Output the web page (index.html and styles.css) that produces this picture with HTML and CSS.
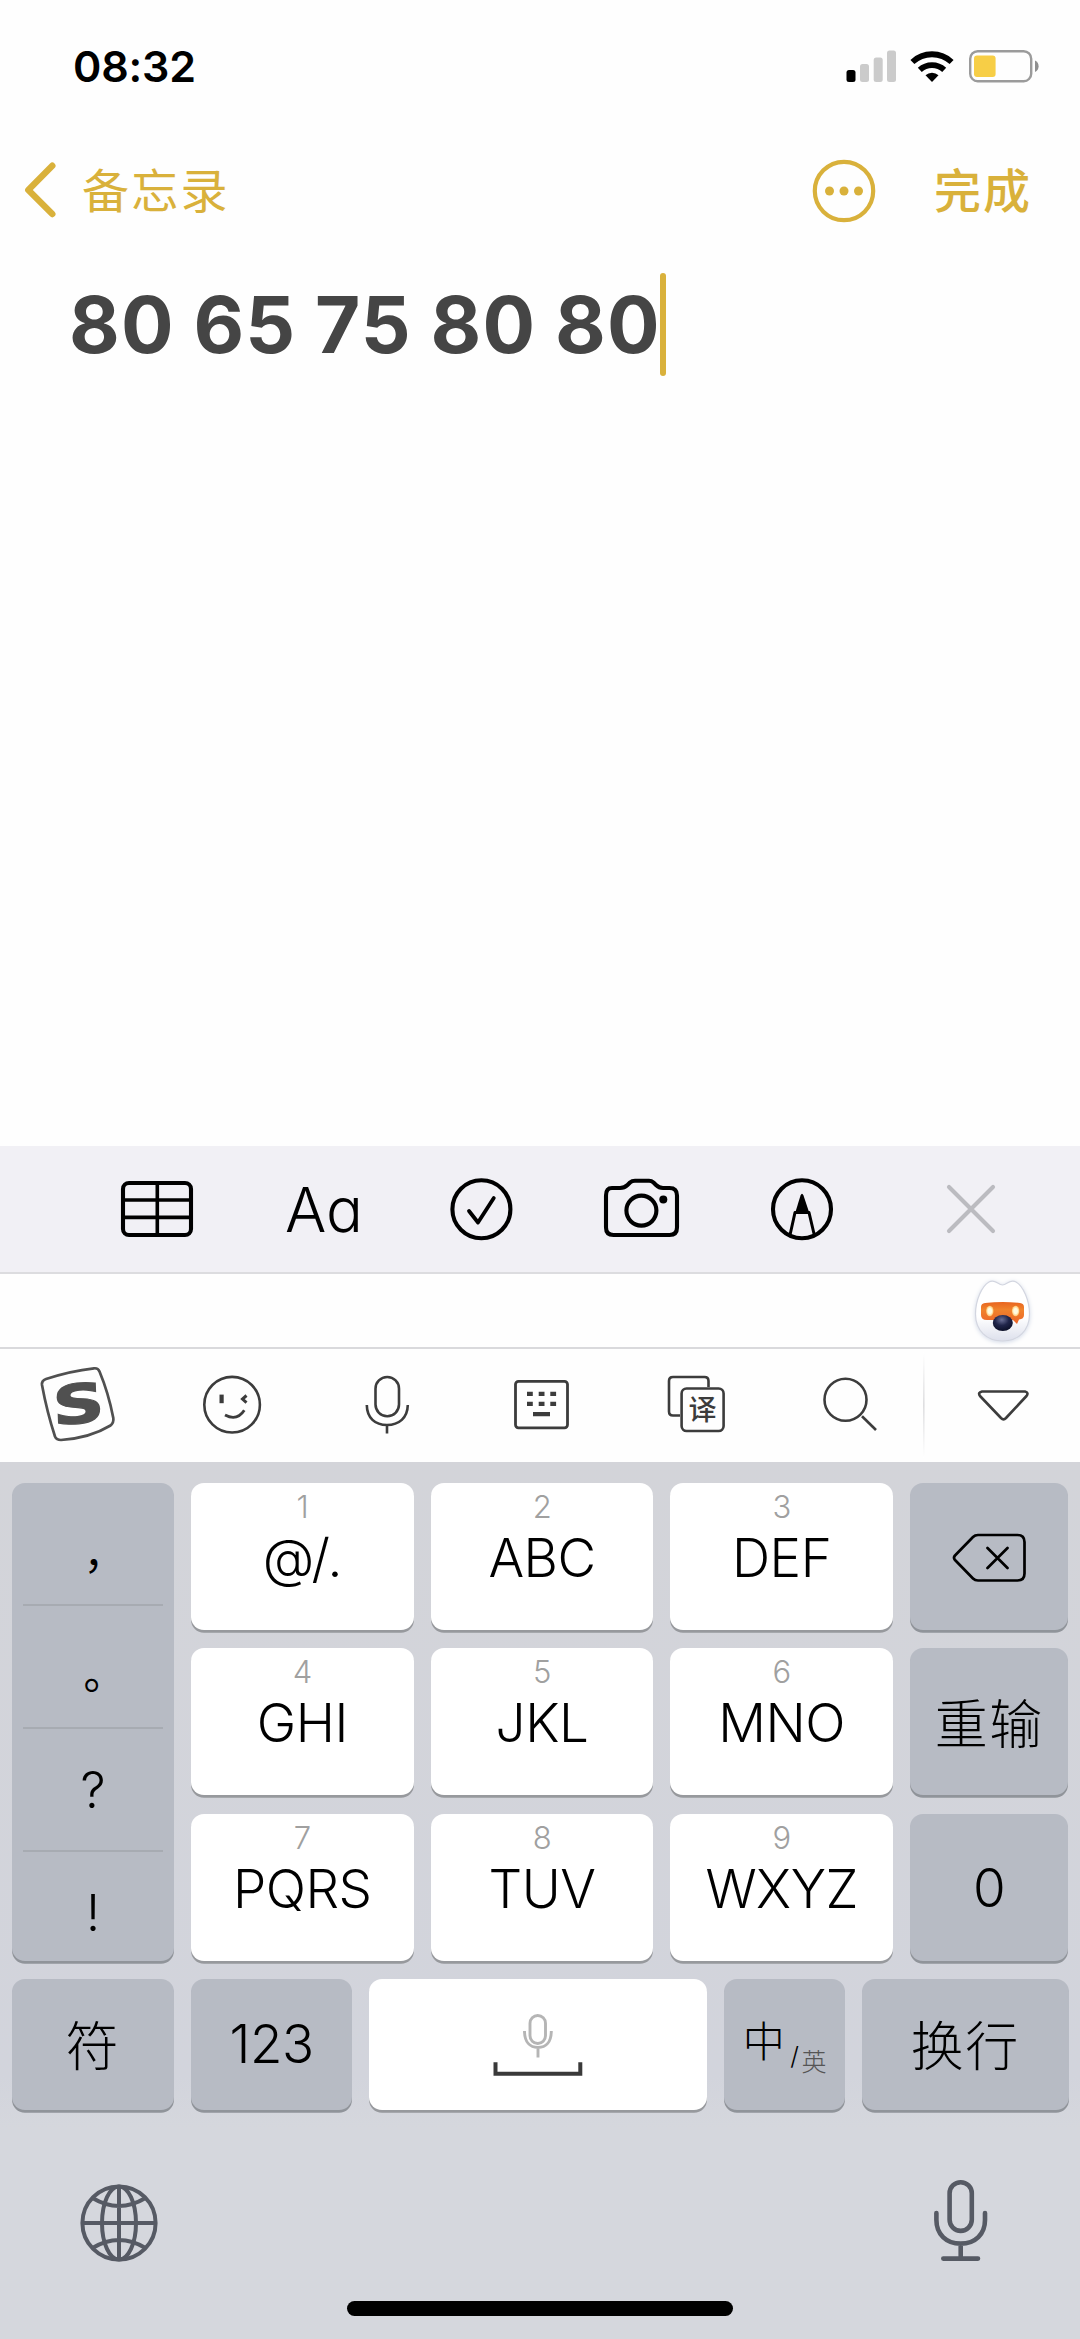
FILE: index.html
```html
<!DOCTYPE html>
<html lang="zh-CN">
<head>
<meta charset="utf-8">
<title>备忘录</title>
<link rel="stylesheet" href="styles.css">
</head>
<body>
<div class="phone">
  <header class="status">
    <span class="time">08:32</span>
    <svg class="status-icons" width="194" height="34" viewBox="846 50 194 34">
      <rect x="846.500" y="70" width="9" height="12" rx="2.5"/>
      <g fill="#cbcbcb"><rect x="860" y="64" width="9" height="18" rx="2.5"/><rect x="873.7" y="57.6" width="9" height="24.4" rx="2.5"/><rect x="887" y="50.6" width="9" height="31.4" rx="2.5"/></g>
      <path d="M932 82 L925.5 75.3 A9.6 9.6 0 0 1 938.5 75.3 Z"/>
      <g fill="none" stroke="#000" stroke-width="5.8"><path d="M919.8 69.8 A18 18 0 0 1 944.2 69.8"/><path d="M912.4 62 A28.6 28.6 0 0 1 951.6 62"/></g>
      <rect x="970.2" y="51.2" width="61" height="30" rx="7.5" fill="none" stroke="#9b9b9b" stroke-width="2.4"/>
      <rect x="974" y="55.6" width="21.6" height="21.4" rx="3" fill="#f7ce46"/>
      <path d="M1035 60.5 a6.4 6.4 0 0 1 0 11.5z" fill="#8f8f8f"/>
    </svg>
  </header>
  <nav class="nav">
    <svg class="chevron" width="34" height="56" viewBox="0 0 34 56"><path d="M29.300 3.700 L5.300 28 L29.300 52" class="gold" stroke-width="6.4"/></svg>
    <span class="back">备忘录</span>
    <svg class="more" width="64" height="64" viewBox="0 0 64 64"><circle cx="32" cy="32" r="29.2" class="gold" stroke-width="4.2"/><g fill="#d9b13b"><circle cx="17.5" cy="32" r="4.5"/><circle cx="32" cy="32" r="4.5"/><circle cx="46.5" cy="32" r="4.5"/></g></svg>
    <span class="done">完成</span>
  </nav>
  <main class="note"><span class="title">80 65 75 80 80</span><i class="caret"></i></main>

  <svg class="format" width="1080" height="126" viewBox="0 1146 1080 126">
    <g fill="none" stroke="#000" stroke-width="4.1" stroke-linecap="round" stroke-linejoin="round">
      <rect x="123" y="1183" width="68" height="52" rx="6"/>
      <path stroke-width="3.6" d="M123 1200H191M123 1217.4H191M157.3 1183V1235"/>
      <circle cx="481.4" cy="1209.2" r="29"/>
      <path stroke-width="3.8" d="M469 1211L478 1222.5L493.8 1198"/>
      <path d="M612 1188H620Q624.5 1188 627.5 1185L630 1182.500Q632 1180.700 635 1180.700H649Q651.500 1180.700 653.500 1182.500L656 1185Q659 1188 663 1188H669.500Q677 1188 677 1195.500V1227.500Q677 1235 669.500 1235H613.500Q606 1235 606 1227.500V1195.500Q606 1188 612 1188Z"/>
      <circle cx="641.4" cy="1210.6" r="15"/>
      <circle cx="802" cy="1209.2" r="29"/>
      <path stroke-width="3" stroke-linecap="butt" d="M790 1235L795 1212.500H809L814.300 1235"/>
      <path stroke="#bbbbc0" d="M949 1187L993 1231M993 1187L949 1231"/>
    </g>
    <circle cx="663.3" cy="1199.5" r="4"/>
    <path d="M795 1213.500L800.500 1195.500Q802 1192 803.500 1195.500L809.500 1213.500Z"/>
    <text class="aa" x="285" y="1231.500" textLength="78" lengthAdjust="spacingAndGlyphs">Aa</text>
  </svg>

  <section class="candidates">
    <svg width="70" height="73" viewBox="967 1274 70 73">
      <defs>
        <linearGradient id="face" x1="0" y1="0" x2="0" y2="1"><stop offset=".6" stop-color="#fff"/><stop offset="1" stop-color="#dde0ec"/></linearGradient>
        <radialGradient id="nose" cx=".45" cy=".3" r=".7"><stop offset="0" stop-color="#6a6f96"/><stop offset=".5" stop-color="#20254a"/><stop offset="1" stop-color="#0c1028"/></radialGradient>
        <radialGradient id="eye"><stop offset=".5" stop-color="#fffbe0"/><stop offset="1" stop-color="#ffc36b"/></radialGradient>
        <linearGradient id="visor" x1="0" y1="0" x2="0" y2="1"><stop offset="0" stop-color="#e8641f"/><stop offset=".35" stop-color="#f0832c"/><stop offset="1" stop-color="#ec6428"/></linearGradient>
      </defs>
      <path class="mascot" fill="url(#face)" stroke="#d3d6e0" stroke-width="1.200" d="M989 1282C995 1278.500 998 1285 1002.500 1285C1007 1285 1010 1278.500 1016 1282C1023 1286 1029.500 1300 1029.500 1314C1029.500 1331 1018 1341 1002.500 1341C987 1341 975.500 1331 975.500 1314C975.500 1300 982 1286 989 1282Z"/>
      <path fill="url(#visor)" d="M985 1303Q1003 1301 1020 1303Q1024 1303.500 1024 1307V1315Q1024 1319 1019 1319.500L1017 1324L1013 1320H987Q981 1320 981 1315V1307Q981 1303.500 985 1303Z"/>
      <ellipse cx="989.800" cy="1311" rx="3.700" ry="5.200" fill="url(#eye)"/><ellipse cx="1015.600" cy="1311" rx="3.700" ry="5.200" fill="url(#eye)"/>
      <ellipse cx="1002.800" cy="1323" rx="10" ry="8" fill="url(#nose)"/>
    </svg>
  </section>

  <svg class="tools" width="1080" height="115" viewBox="0 1349 1080 113">
    <defs><linearGradient id="fade" x1="0" y1="0" x2="0" y2="1"><stop offset="0" stop-color="#fff"/><stop offset=".5" stop-color="#dedee0"/><stop offset="1" stop-color="#fff"/></linearGradient></defs>
    <g fill="none" stroke="#3c3c3c" stroke-width="2.600">
      <path stroke="#505050" stroke-width="2.700" d="M46 1379Q70 1371 94 1368.300Q98 1367.800 99.500 1371.500Q108.500 1393 113.300 1418Q114 1422.500 110.500 1425.500Q90 1438 61 1440Q56.500 1440 55 1436.500Q47 1412 42 1385Q41.500 1380.500 46 1379Z"/>
      <circle cx="232.100" cy="1404.700" r="27.800"/>
      <path stroke-width="3" d="M246.500 1395.500L242.500 1399L246.500 1402.600"/>
      <path stroke-width="2.800" d="M225 1415Q237 1421.500 244.300 1410.300"/>
      <rect x="375.500" y="1377" width="23.500" height="39.300" rx="11.700"/>
      <path d="M366.800 1405C367 1418 375 1425 387 1425S407.500 1418 407.800 1405M387 1425V1433.500"/>
      <rect x="515.500" y="1381.300" width="52" height="46.500" rx="3" stroke-width="2.800"/>
      <path d="M680 1415.500H673Q669 1415.500 669 1411.500V1381Q669 1377 673 1377H704.500Q708.500 1377 708.500 1381V1387"/>
      <rect x="681.600" y="1388.500" width="42" height="42.500" rx="5"/>
      <circle cx="845.500" cy="1399.700" r="21"/>
      <path d="M862 1416.300L876 1430"/>
      <path stroke-linejoin="round" d="M982 1391.500H1025Q1029 1392.500 1026.500 1396L1006 1418Q1003.500 1420.500 1001 1418L980 1396Q977.500 1392.500 982 1391.500Z"/>
    </g>
    <g fill="#3c3c3c"><rect x="219.500" y="1394.600" width="4.200" height="8.600"/>
      <path d="M527 1391.700h5.800v4.300h-5.800zM538.700 1391.700h5.800v4.300h-5.800zM550.300 1391.700h5.800v4.300h-5.800zM527 1401.700h5.800v4.300h-5.800zM538.700 1401.700h5.800v4.300h-5.800zM550.300 1401.700h5.800v4.300h-5.800zM533 1412h17v4.300h-17z"/></g>
    <rect x="923" y="1352" width="1.600" height="106" fill="url(#fade)"/>
    <text class="logo" transform="translate(78.500 1403.500) rotate(-6) skewX(-4) scale(1.340 1)" x="0" y="19.500" text-anchor="middle">S</text>
    <text class="trans" x="702.500" y="1420" text-anchor="middle">译</text>
  </svg>

  <section class="keyboard">
    <div class="pad">
      <div class="key dark marks"><span class="comma">，</span><span class="stop">。</span><span>?</span><span>!</span></div>
      <div class="key"><small>1</small><b>@/.</b></div>
      <div class="key"><small>2</small><b>ABC</b></div>
      <div class="key"><small>3</small><b>DEF</b></div>
      <div class="key dark"><svg width="76" height="52" viewBox="950.500 1531.500 76 52" fill="none" stroke="#000" stroke-width="2.700" stroke-linecap="round" stroke-linejoin="round"><path d="M977.500 1535.500H1017Q1024 1535.500 1024 1542.500V1574Q1024 1581 1017 1581H977.500Q974.500 1581 972.500 1579L954.500 1560.500Q952.500 1558.300 954.500 1556L972.500 1537.500Q974.500 1535.500 977.500 1535.500ZM987 1548.500L1007 1568.500M1007 1548.500L987 1568.500"/></svg></div>
      <div class="key"><small>4</small><b>GHI</b></div>
      <div class="key"><small>5</small><b>JKL</b></div>
      <div class="key"><small>6</small><b>MNO</b></div>
      <div class="key dark han">重输</div>
      <div class="key"><small>7</small><b>PQRS</b></div>
      <div class="key"><small>8</small><b>TUV</b></div>
      <div class="key"><small>9</small><b>WXYZ</b></div>
      <div class="key dark zero">0</div>
    </div>
    <div class="bottom-row">
      <div class="key dark han">符</div>
      <div class="key dark">123</div>
      <div class="key space"><svg width="92" height="66" viewBox="492 2012 92 66" fill="none"><g stroke="#b5b5b5" stroke-width="2.900"><rect x="530" y="2016.500" width="15.500" height="28" rx="7.700"/><path d="M524.500 2032C524.500 2043 530 2048.500 538 2048.500S551.300 2043 551.300 2032M538 2048.500V2058.500"/></g><path stroke="#3a3a3a" stroke-width="4" d="M495.500 2063.300V2074.700H580.300V2063.300"/></svg></div>
      <div class="key dark lang"><span>中</span><em>/</em><i>英</i></div>
      <div class="key dark han">换行</div>
    </div>
    <div class="system">
      <svg width="80" height="80" viewBox="-40 -40 80 80" fill="none" stroke="#565a64" stroke-width="4"><circle r="36.600"/><ellipse rx="17" ry="36.600"/><path d="M0 -37V37M-37 0H37M-26.500 -25Q0 -9 26.500 -25M-26.500 25Q0 9 26.500 25"/></svg>
      <svg class="dictate" width="56" height="84" viewBox="933 2178 56 84" fill="none" stroke="#565a64" stroke-width="4.600" stroke-linecap="round"><rect x="949.600" y="2182.200" width="22.200" height="48.700" rx="11.100"/><path d="M936.400 2213V2220C936.400 2234 946 2243.600 960.700 2243.600S985 2234 985 2220V2213M960.700 2244V2258.500M943.300 2258.600H978"/></svg>
    </div>
    <div class="home"></div>
  </section>
</div>
</body>
</html>
```
FILE: styles.css
```css
* { box-sizing: border-box; }
body { margin: 0; background: #fefefe; font-family: Inter, "Noto Sans CJK SC", sans-serif; color: #000; }
svg { display: block; flex: none; }
.phone { width: 1080px; height: 2339px; display: flex; flex-direction: column; overflow: hidden; }
.status { height: 132px; padding: 50px 40px 0 73px; display: flex; justify-content: space-between; align-items: flex-start; }
.time { font-size: 43px; font-weight: 600; line-height: 32px; letter-spacing: -.2px; }
.nav { height: 117px; padding: 0 48px 0 23px; display: flex; align-items: center; color: #d9b13b; }
.chevron { margin-top: -1px; }
.gold { fill: none; stroke: #d9b13b; stroke-linecap: round; stroke-linejoin: round; }
.back { margin: -5px 0 0 25px; font: 400 47px/64px "Noto Sans CJK SC", sans-serif; letter-spacing: 2.2px; }
.more { margin-left: auto; }
.done { margin: -5px 0 0 58px; font: 500 47px/64px "Noto Sans CJK SC", sans-serif; letter-spacing: 2px; }
.note { flex: 1; padding: 24px 0 0 69px; display: flex; align-items: flex-start; }
.title { font-size: 78px; font-weight: 700; line-height: 103px; letter-spacing: 1.2px; word-spacing: -1px; color: #454545; white-space: nowrap; width: 591px; }
.caret { width: 6px; height: 103px; border-radius: 3px; background: #d9b13b; }
.format { background: #f1f0f5; }
.aa { font: 350 62px Inter, sans-serif; font-feature-settings: "cv11"; }
.candidates { height: 75px; border-top: 2px solid #dcdcdf; padding-right: 43px; display: flex; justify-content: flex-end; background: #fefefe; }
.mascot { filter: drop-shadow(0 1px 2px #d3dae8); }
.tools { border-top: 2px solid #d9d9dc; background: #fefefe; }
.logo { font: 700 54px "DejaVu Sans", sans-serif; fill: #505050; stroke: #505050; stroke-width: 1.2px; }
.trans { font: 500 28px "Noto Sans CJK SC", sans-serif; fill: #3c3c3c; }
.keyboard { height: 877px; padding: 21.3px 11.5px 0; background: linear-gradient(#d3d4d9, #d2d4dc 70%, #d5d7dd 76%); }
.pad { display: grid; grid-template-columns: 162.5px 222.8px 222.8px 222.8px 158.5px; grid-template-rows: repeat(3, 147px); row-gap: 18.2px; justify-content: space-between; }
.key { display: flex; align-items: center; justify-content: center; border-radius: 13px; background: #fff; box-shadow: 0 2.7px 0 #97999d; font-size: 53px; font-weight: 300; letter-spacing: -.5px; }
.pad .key:not(.dark) { flex-direction: column; justify-content: flex-start; }
.key small { font-size: 31px; font-weight: 300; line-height: 36px; margin-top: 6px; color: #a0a0a0; }
.key b { font-weight: 300; line-height: 66px; }
.dark { background: #b7bbc4; box-shadow: 0 2.7px 0 #90949a; }
.han { letter-spacing: 1.5px; padding-bottom: 2px; }
.zero { padding-top: 2px; }
.marks { grid-row: 1 / 4; flex-direction: column; padding: 0 11px; font-size: 50px; }
.marks span { height: 123px; width: 100%; text-align: center; line-height: 123px; border-bottom: 2px solid #a7abb2; }
.marks span:last-child { height: 108px; border: 0; }
.marks .comma { font-size: 42px; font-weight: 400; line-height: 141px; padding-left: 23px; }
.marks .stop { font-size: 42px; font-weight: 400; line-height: 135px; padding-left: 23px; }
.bottom-row { margin-top: 18.2px; height: 131px; display: grid; grid-template-columns: 162.5px 161px 337.5px 121px 206.5px; justify-content: space-between; }
.lang span { font-size: 42px; margin-bottom: 12px; }
.lang em { font-size: 25px; font-style: normal; margin: 24px 0 0 6px; }
.lang i { font-size: 25px; font-style: normal; color: #555; margin: 32px 0 0 3px; }
.system { height: 190px; padding: 73px 80px 0 67px; display: flex; justify-content: space-between; align-items: flex-start; }
.dictate { margin-top: -5px; }
.home { width: 386px; height: 15px; margin: 1px auto 0; border-radius: 8px; background: #000; }
```
